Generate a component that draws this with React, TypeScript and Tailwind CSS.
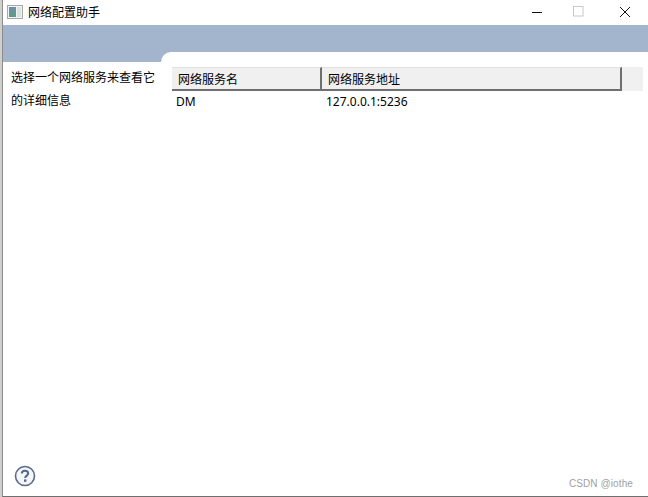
import React from 'react';

const cjk = { fontFamily: '"Noto Sans CJK SC", "Liberation Sans", sans-serif' };

const App: React.FC = () => {
  return (
    <div className="w-[648px] h-[497px] bg-white overflow-hidden border-l-2 border-l-[#cfcfcf]">
      <div className="h-full flex flex-col border-l border-l-[#8c8c8c] border-b border-b-[#6f6f6f] text-black text-[12px]" style={cjk}>
        {/* title bar */}
        <div className="h-[25px] shrink-0 flex items-center pb-[2px]">
          <svg width="16" height="14" viewBox="0 0 16 14" className="ml-[4px]">
            <rect x="0.5" y="0.5" width="15" height="13" fill="#f2f2f2" stroke="#a8a8a8" />
            <rect x="2" y="2" width="7" height="10" fill="#5f9a8c" />
            <rect x="2" y="2" width="7" height="4" fill="#6d8fb0" />
            <rect x="10" y="2" width="4" height="10" fill="#d9e3e0" />
          </svg>
          <span className="ml-[5px] text-[12px] leading-none">网络配置助手</span>
          <div className="ml-auto flex items-center">
            <svg width="12" height="12" viewBox="0 0 12 12" className="mr-[30px]">
              <path d="M1 6.5H11" stroke="#111" strokeWidth="1" />
            </svg>
            <svg width="11" height="11" viewBox="0 0 11 11" className="mr-[35px]">
              <rect x="0.5" y="0.5" width="9.5" height="9.5" fill="none" stroke="#c8c8c8" />
            </svg>
            <svg width="12" height="12" viewBox="0 0 12 12" className="mr-[17px]">
              <path d="M1 1L11 11M11 1L1 11" stroke="#111" strokeWidth="1" />
            </svg>
          </div>
        </div>

        {/* blue header band */}
        <div className="h-[27px] shrink-0 bg-[#a3b5cd]" />
        <div className="h-[10px] shrink-0 bg-[#a3b5cd] flex">
          <div className="w-[158px] shrink-0" />
          <div className="flex-1 bg-white rounded-tl-[10px]" />
        </div>

        {/* body */}
        <div className="flex-1 bg-white flex min-h-0">
          <div className="w-[169px] shrink-0 pl-[8px] pr-[13px] pt-[3px] leading-[23px]">
            选择一个网络服务来查看它的详细信息
          </div>
          <div className="w-[471px] pt-[5px]">
            <div className="flex h-[24px] bg-[#f0f0f0]">
              <div className="w-[150px] border-t border-t-[#e0e0e0] border-b-2 border-b-[#6f6f6f] border-r-2 border-r-[#6f6f6f] pl-[6px] leading-[21px]">网络服务名</div>
              <div className="w-[300px] border-t border-t-[#e0e0e0] border-b-2 border-b-[#6f6f6f] border-r-2 border-r-[#6f6f6f] pl-[6px] leading-[21px]">网络服务地址</div>
            </div>
            <div className="flex h-[22px] items-center" style={{ fontFamily: '"Noto Sans", "Noto Sans CJK SC", sans-serif' }}>
              <div className="w-[150px] pl-[4px]">DM</div>
              <div className="pl-[4px]">127.0.0.1:5236</div>
            </div>
          </div>
        </div>

        {/* footer */}
        <div className="h-[31px] shrink-0 flex items-start justify-between">
          <svg width="22" height="22" viewBox="0 0 22 22" className="ml-[11px]">
            <circle cx="11" cy="11" r="9.5" fill="#f4f6fa" stroke="#5b6b8c" strokeWidth="1.6" />
            <path d="M7.8 8.6C7.8 6.8 9.2 5.8 11 5.8C12.9 5.8 14.2 6.9 14.2 8.5C14.2 10.6 11.2 10.7 11.2 13" fill="none" stroke="#56678a" strokeWidth="2" />
            <rect x="10" y="14.4" width="2.4" height="2.4" fill="#56678a" />
          </svg>
          <span className="mr-[15px] mt-[14px] text-[10px] tracking-[0.1px] leading-none text-[#a0a0a0]" style={{ fontFamily: '"Liberation Sans", sans-serif' }}>CSDN @iothe</span>
        </div>
      </div>
    </div>
  );
};

export default App;
